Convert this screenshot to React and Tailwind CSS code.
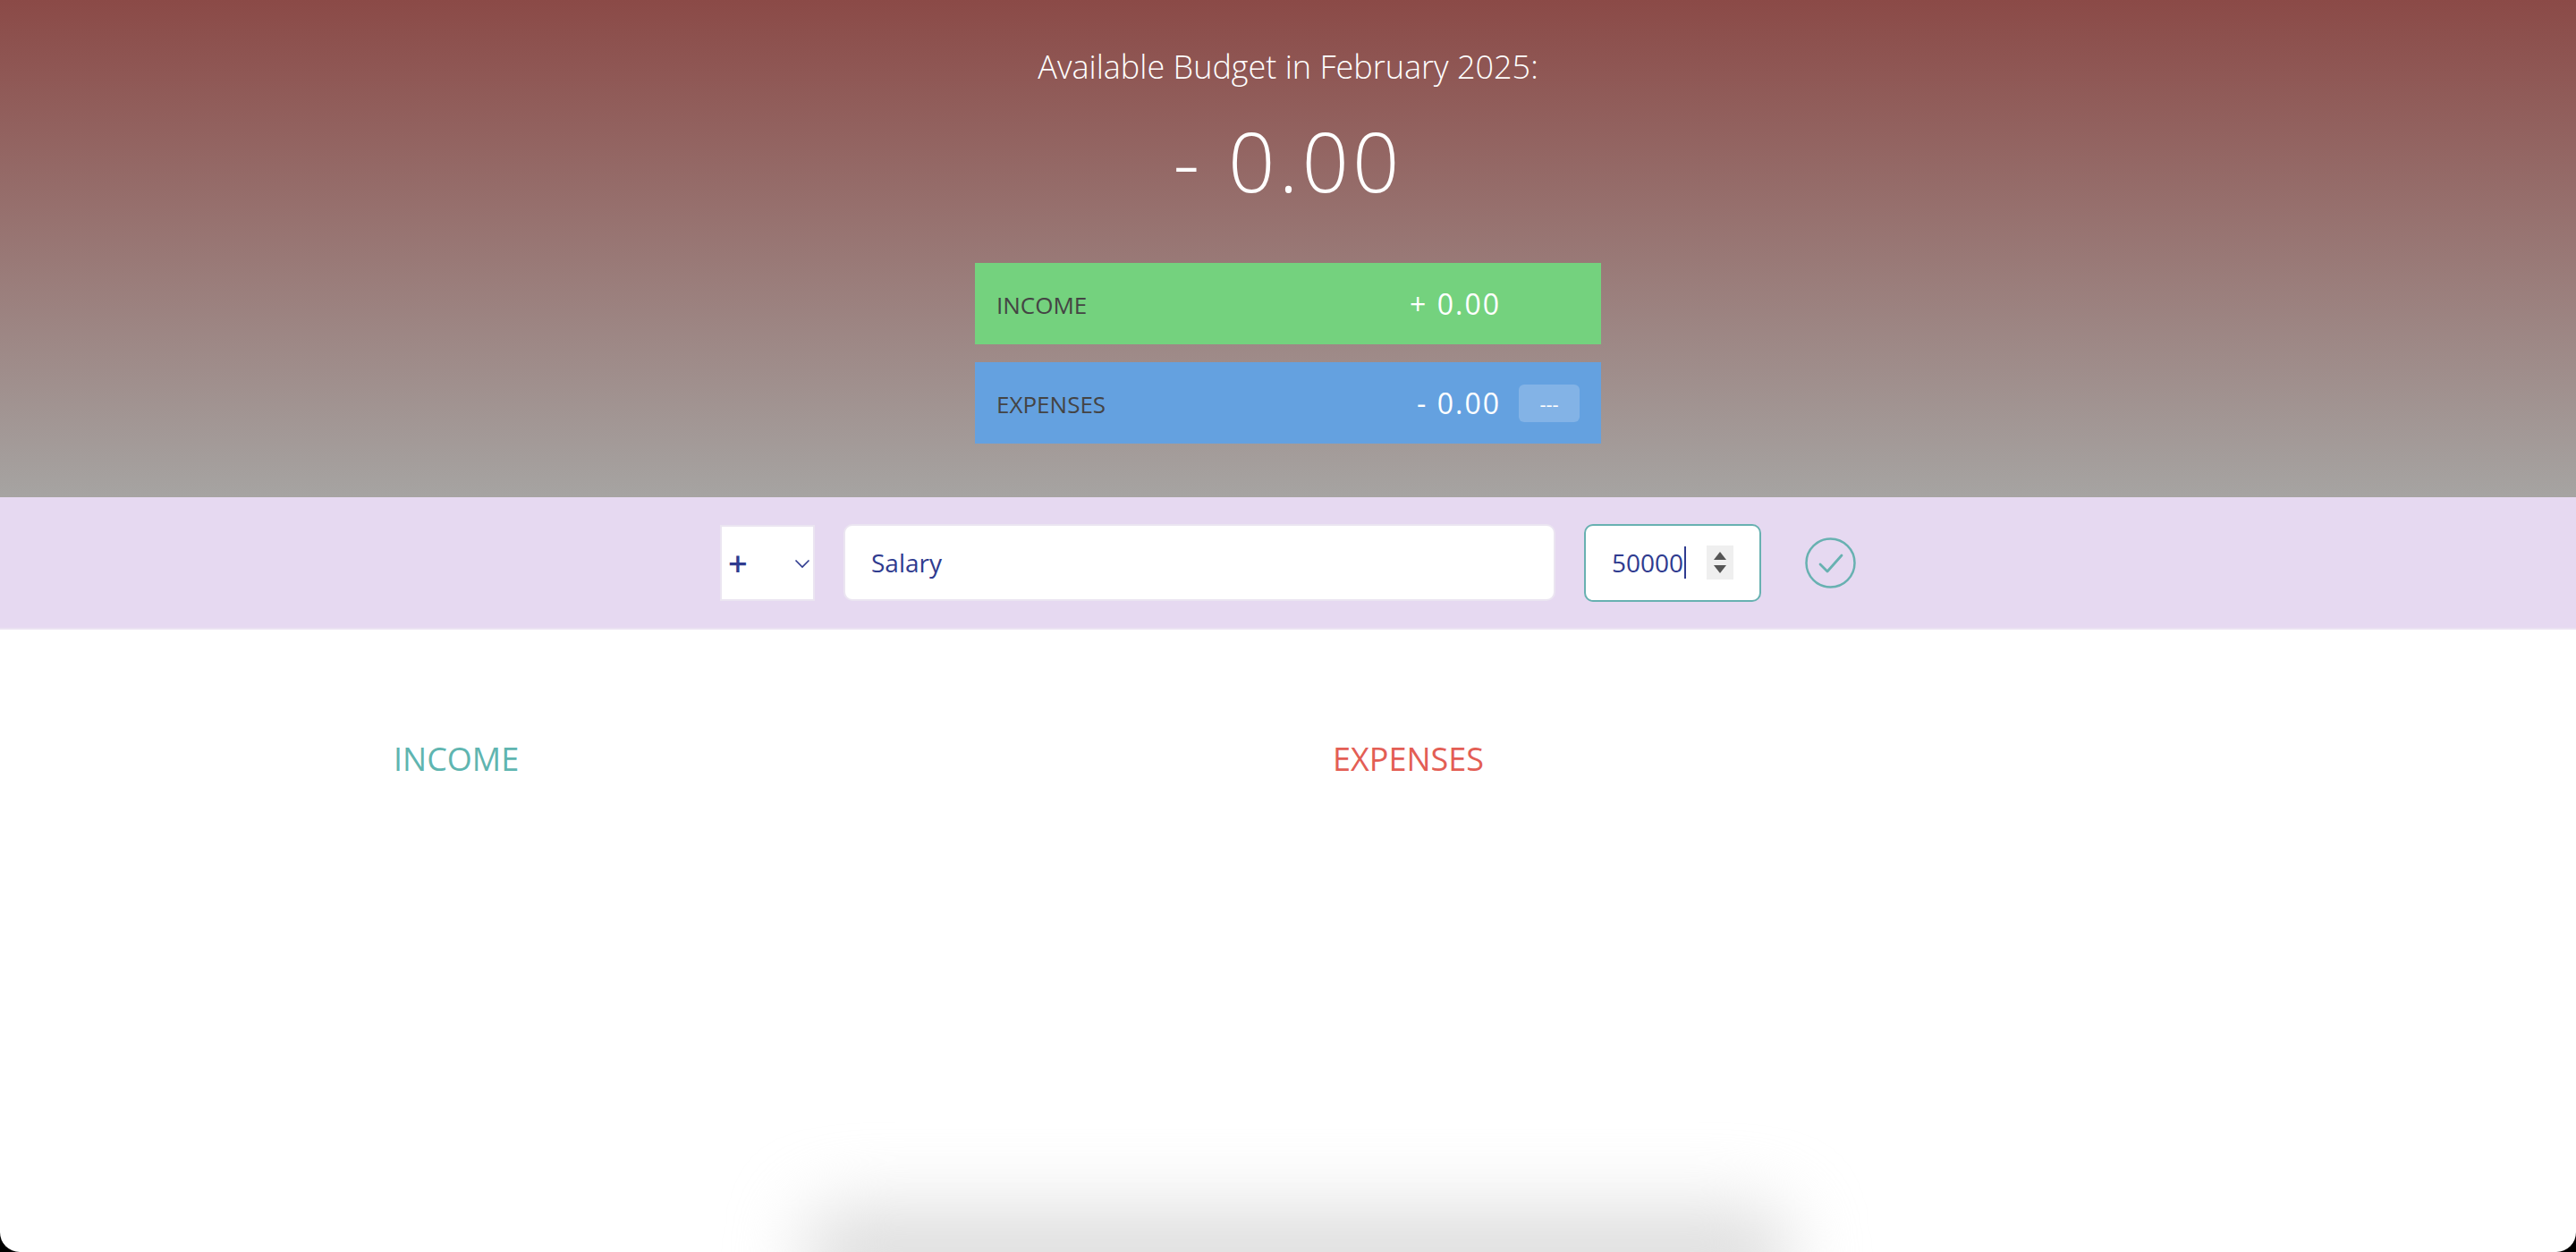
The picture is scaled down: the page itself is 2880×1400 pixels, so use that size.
export default function App() {
  return (
    <div className="w-full h-[1400px] bg-black font-['Open_Sans',sans-serif]">
      <div className="relative w-full h-full bg-white rounded-b-[22px] overflow-hidden text-[#555]">
        {/* budget header */}
        <div className="h-[556px] bg-[linear-gradient(to_bottom,#8b4a47,#a6a4a2)] flex justify-center pt-[50px]">
          <div className="w-[700px] flex flex-col text-white">
            <div className="text-[36px] leading-[49px] font-light text-center mb-[18px]">
              Available Budget in February 2025:
            </div>
            <div className="text-[92px] leading-[125px] font-light text-center tracking-[4px] mb-[52px]">
              - 0.00
            </div>
            <div className="h-[91px] bg-[#74d27e] flex items-center justify-between px-[24px] mb-[20px]">
              <span className="text-[26px] text-[#444] uppercase mt-[4px]">Income</span>
              <div className="flex items-center">
                <span className="text-[32px] tracking-[2px]">+ 0.00</span>
                <span className="w-[68px] ml-[20px]"></span>
              </div>
            </div>
            <div className="h-[91px] bg-[#64a1e0] flex items-center justify-between px-[24px]">
              <span className="text-[26px] text-[#444] uppercase mt-[4px]">Expenses</span>
              <div className="flex items-center">
                <span className="text-[32px] tracking-[2px]">- 0.00</span>
                <span className="w-[68px] ml-[20px] py-[6px] text-[22px] leading-[30px] text-center bg-white/20 rounded-[6px]">---</span>
              </div>
            </div>
          </div>
        </div>

        {/* add bar */}
        <div className="h-[148px] bg-[#e6d9f1] border-b-2 border-[#ebe3f2] flex items-center justify-center">
          <div className="relative w-[106px] h-[85px] bg-white border-2 border-[#ebe5f1]">
            <select className="appearance-none w-full h-full bg-transparent pl-[7px] text-[38px] font-semibold text-[#2f3b8f] outline-none">
              <option>+</option>
              <option>-</option>
            </select>
            <svg className="absolute left-[81px] top-[36px] pointer-events-none" width="18" height="11" viewBox="0 0 18 11">
              <polyline points="1.5,1.5 9,9 16.5,1.5" fill="none" stroke="#2f3b8f" strokeWidth="1.6" />
            </svg>
          </div>
          <input
            type="text"
            readOnly
            value="Salary"
            className="ml-[32px] w-[796px] h-[86px] bg-white border-2 border-[#ebe5f1] rounded-[10px] px-[29px] text-[28px] text-[#2f3b8f] outline-none font-['Open_Sans',sans-serif]"
          />
          <div className="ml-[32px] w-[198px] h-[87px] bg-white border-2 border-[#68b1b1] rounded-[10px] flex items-center pl-[29px] pr-[29px]">
            <span className="text-[28px] text-[#2f3b8f]">50000</span>
            <span className="w-[2px] h-[36px] bg-[#2f3b8f] ml-[1px]"></span>
            <div className="ml-auto w-[30px] h-[38px] bg-[#efefef] flex flex-col items-center justify-center gap-[6px]">
              <svg width="14" height="9" viewBox="0 0 14 9">
                <polygon points="7,0 14,9 0,9" fill="#555" />
              </svg>
              <svg width="14" height="9" viewBox="0 0 14 9">
                <polygon points="0,0 14,0 7,9" fill="#555" />
              </svg>
            </div>
          </div>
          <button className="ml-[49px] w-[57px] h-[57px] flex items-center justify-center">
            <svg width="57" height="57" viewBox="0 0 57 57">
              <circle cx="28.5" cy="28.5" r="27" fill="none" stroke="#68b1b1" strokeWidth="2.5" />
              <polyline points="17,30 25,38 41,20" fill="none" stroke="#68b1b1" strokeWidth="2.8" strokeLinecap="round" strokeLinejoin="round" />
            </svg>
          </button>
        </div>

        {/* lists */}
        <div className="w-[2000px] mx-auto mt-[120px] flex">
          <div className="w-[950px] mr-[100px]">
            <h2 className="uppercase text-[36px] leading-[49px] font-normal text-[#5fb5b0] mb-[30px]">Income</h2>
          </div>
          <div className="w-[950px]">
            <h2 className="uppercase text-[36px] leading-[49px] font-normal text-[#e35e55] mb-[30px]">Expenses</h2>
          </div>
        </div>

        {/* shadow at bottom edge */}
        <div className="absolute left-[900px] w-[1100px] bottom-[-60px] h-[110px] bg-[#dedede] rounded-[40px] blur-[40px]"></div>
      </div>
    </div>
  );
}
